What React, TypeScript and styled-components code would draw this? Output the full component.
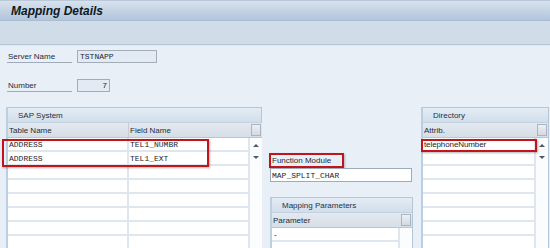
import React from 'react';
import styled, { createGlobalStyle } from 'styled-components';

const Global = createGlobalStyle`
  html, body { margin: 0; padding: 0; background: #e9eff6; }
  #root { width: 550px; height: 248px; overflow: hidden; }
`;

const Screen = styled.div`
  width: 550px;
  height: 248px;
  overflow: hidden;
  background: #e9eff6;
  font-family: "Liberation Sans", Arial, sans-serif;
  font-size: 8px;
  color: #1f2b38;
  display: flex;
  flex-direction: column;
`;

const TitleBar = styled.div`
  height: 21px;
  flex: none;
  box-sizing: border-box;
  border-top: 1px solid #b9c9d9;
  border-bottom: 1px solid #a8bcd2;
  background: linear-gradient(#d7e2ed, #b1c5db);
  display: flex;
  align-items: center;
  padding-left: 11px;
  font: italic bold 12px "Liberation Sans", Arial, sans-serif;
  color: #0e1822;
`;

const Toolbar = styled.div`
  height: 24px;
  flex: none;
  box-sizing: border-box;
  background: #d0dde8;
  border-bottom: 1px solid #b7c6d5;
  box-shadow: 0 1px 0 #dfe7ef;
`;

const Content = styled.div`
  flex: 1;
  padding-top: 5px;
  display: flex;
  flex-direction: column;
`;

const FormRow = styled.div<{ $top: number }>`
  display: flex;
  height: 13px;
  padding-left: 7px;
  margin-top: ${p => p.$top}px;
`;

const FieldLabel = styled.div`
  width: 65px;
  box-sizing: border-box;
  border-bottom: 1px solid #9eacba;
  padding-left: 1px;
  display: flex;
  align-items: center;
  color: #1e2a36;
`;

const Field = styled.div<{ $w: number; $ro?: boolean; $right?: boolean }>`
  width: ${p => p.$w}px;
  box-sizing: border-box;
  margin-left: 5px;
  border: 1px solid ${p => (p.$ro ? '#a4adb7' : '#9ba8b6')};
  background: ${p => (p.$ro ? '#e2ebf4' : '#ffffff')};
  font-family: "Liberation Mono", "Courier New", monospace;
  font-size: 8px;
  color: #1f252b;
  display: flex;
  align-items: center;
  justify-content: ${p => (p.$right ? 'flex-end' : 'flex-start')};
  padding: 0 2px;
`;

const PanelsRow = styled.div`
  position: relative;
  display: flex;
  align-items: flex-start;
  padding-left: 6px;
  margin-top: 15px;
`;

const Panel = styled.div<{ $w: number; $ml?: number; $mt?: number }>`
  width: ${p => p.$w}px;
  flex: none;
  box-sizing: border-box;
  margin-left: ${p => p.$ml ?? 0}px;
  margin-top: ${p => p.$mt ?? 0}px;
  border: 1px solid #b4c6d8;
  border-left: 2px solid #bccfe1;
  background: #ffffff;
`;

const PanelHeader = styled.div<{ $indent: number }>`
  height: 15px;
  box-sizing: border-box;
  background: linear-gradient(#e3ecf5, #d1deea);
  border-bottom: 1px solid #c3d2e0;
  padding-left: ${p => p.$indent}px;
  display: flex;
  align-items: center;
  color: #24323f;
`;

const Grid = styled.div`
  display: flex;
`;

const Rows = styled.div`
  flex: 1;
  display: flex;
  flex-direction: column;
`;

const HeadRow = styled.div<{ $cols: string }>`
  display: grid;
  grid-template-columns: ${p => p.$cols};
  height: 15px;
  box-sizing: border-box;
  background: linear-gradient(#e4e9ef, #d6dee7);
  border-bottom: 1px solid #bcc6d1;
`;

const HeadCell = styled.div`
  display: flex;
  align-items: center;
  padding-left: 1px;
  border-right: 1px solid #c5ced8;
  color: #222e3a;
  &:last-child { border-right: none; }
`;

const BodyRow = styled.div<{ $cols: string }>`
  display: grid;
  grid-template-columns: ${p => p.$cols};
  height: 14px;
`;

const Cell = styled.div`
  box-sizing: border-box;
  border-bottom: 2px solid #e0e6ee;
  border-right: 2px solid #e0e6ee;
  display: flex;
  align-items: center;
  padding-left: 1px;
  font-family: "Liberation Mono", "Courier New", monospace;
  font-size: 8px;
  color: #1f252b;
  white-space: nowrap;
  overflow: hidden;
`;

const AttrCell = styled(Cell)`
  font-family: "Liberation Sans", Arial, sans-serif;
  letter-spacing: -0.1px;
  color: #1a232d;
`;

const ScrollCol = styled.div`
  width: 12px;
  flex: none;
  display: flex;
  flex-direction: column;
  background: #fbfcfd;
`;

const ScrollCorner = styled.div`
  height: 15px;
  box-sizing: border-box;
  background: linear-gradient(#e4e9ef, #d6dee7);
  border-bottom: 1px solid #bcc6d1;
  padding: 1px;
  display: flex;
`;

const CornerButton = styled.div`
  flex: 1;
  border: 1px solid #a9b5c2;
  background: linear-gradient(#eef1f4, #d2d9e0);
`;

const Arrow = styled.div`
  height: 13px;
  display: flex;
  align-items: center;
  justify-content: center;
`;

const Middle = styled.div`
  width: 143px;
  margin-left: 8px;
  flex: none;
  display: flex;
  flex-direction: column;
  padding-top: 46px;
`;

const ModuleLabel = styled.div`
  align-self: flex-start;
  margin-left: -1px;
  height: 15px;
  width: 75px;
  box-sizing: border-box;
  border: 2px solid #c2151b;
  box-shadow: 1px 1px 2px rgba(0, 0, 0, 0.25);
  padding-left: 1px;
  display: flex;
  align-items: center;
  color: #1e2a36;
`;

const ModuleField = styled.div`
  width: 142px;
  height: 14px;
  box-sizing: border-box;
  border: 1px solid #9eabb9;
  background: #ffffff;
  font-family: "Liberation Mono", "Courier New", monospace;
  font-size: 8px;
  color: #1f252b;
  display: flex;
  align-items: center;
  padding-left: 1px;
`;

const Highlight = styled.div<{ $x: number; $y: number; $w: number; $h: number }>`
  position: absolute;
  left: ${p => p.$x}px;
  top: ${p => p.$y}px;
  width: ${p => p.$w}px;
  height: ${p => p.$h}px;
  box-sizing: border-box;
  border: 2px solid #c2151b;
  box-shadow: 1px 1px 2px rgba(0, 0, 0, 0.3);
  pointer-events: none;
`;

const Up = () => (
  <svg width="6" height="4" viewBox="0 0 6 4"><path d="M0 4 L3 1 L6 4 Z" fill="#4c5866" /></svg>
);
const Down = () => (
  <svg width="6" height="4" viewBox="0 0 6 4"><path d="M0 0 L3 3 L6 0 Z" fill="#4c5866" /></svg>
);

type TableProps = {
  cols: string;
  headers: string[];
  rows: string[][];
  sans?: boolean;
  arrows?: boolean;
};

const Table: React.FC<TableProps> = ({ cols, headers, rows, sans, arrows = true }) => (
  <Grid>
    <Rows>
      <HeadRow $cols={cols}>
        {headers.map(h => (
          <HeadCell key={h}>{h}</HeadCell>
        ))}
      </HeadRow>
      {rows.map((r, i) => (
        <BodyRow $cols={cols} key={i}>
          {r.map((c, j) =>
            sans ? <AttrCell key={j}>{c}</AttrCell> : <Cell key={j}>{c}</Cell>
          )}
        </BodyRow>
      ))}
    </Rows>
    <ScrollCol>
      <ScrollCorner>
        <CornerButton />
      </ScrollCorner>
      {arrows && (
        <>
          <Arrow><Up /></Arrow>
          <Arrow><Down /></Arrow>
        </>
      )}
    </ScrollCol>
  </Grid>
);

const empty = (n: number, c: number) => Array.from({ length: n }, () => Array(c).fill(''));

export default function App() {
  const sapRows = [['ADDRESS', 'TEL1_NUMBR'], ['ADDRESS', 'TEL1_EXT'], ...empty(6, 2)];
  const dirRows = [['telephoneNumber'], ...empty(7, 1)];
  const paramRows = [['-'], ['']];
  return (
    <Screen>
      <Global />
      <TitleBar>Mapping Details</TitleBar>
      <Toolbar />
      <Content>
        <FormRow $top={0}>
          <FieldLabel>Server Name</FieldLabel>
          <Field $w={80} $ro>TSTNAPP</Field>
        </FormRow>
        <FormRow $top={16}>
          <FieldLabel>Number</FieldLabel>
          <Field $w={33} $ro $right>7</Field>
        </FormRow>
        <PanelsRow>
          <Panel $w={256}>
            <PanelHeader $indent={10}>SAP System</PanelHeader>
            <Table cols="121px 121px" headers={['Table Name', 'Field Name']} rows={sapRows} />
          </Panel>
          <Middle>
            <ModuleLabel>Function Module</ModuleLabel>
            <ModuleField>MAP_SPLIT_CHAR</ModuleField>
            <Panel $w={143} $mt={15}>
              <PanelHeader $indent={10}>Mapping Parameters</PanelHeader>
              <Table cols="1fr" headers={['Parameter']} rows={paramRows} arrows={false} />
            </Panel>
          </Middle>
          <Panel $w={128} $ml={8}>
            <PanelHeader $indent={10}>Directory</PanelHeader>
            <Table cols="1fr" headers={['Attrib.']} rows={dirRows} sans />
          </Panel>
          <Highlight $x={2} $y={32} $w={207} $h={28} />
          <Highlight $x={421} $y={32} $w={116} $h={13} />
        </PanelsRow>
      </Content>
    </Screen>
  );
}
